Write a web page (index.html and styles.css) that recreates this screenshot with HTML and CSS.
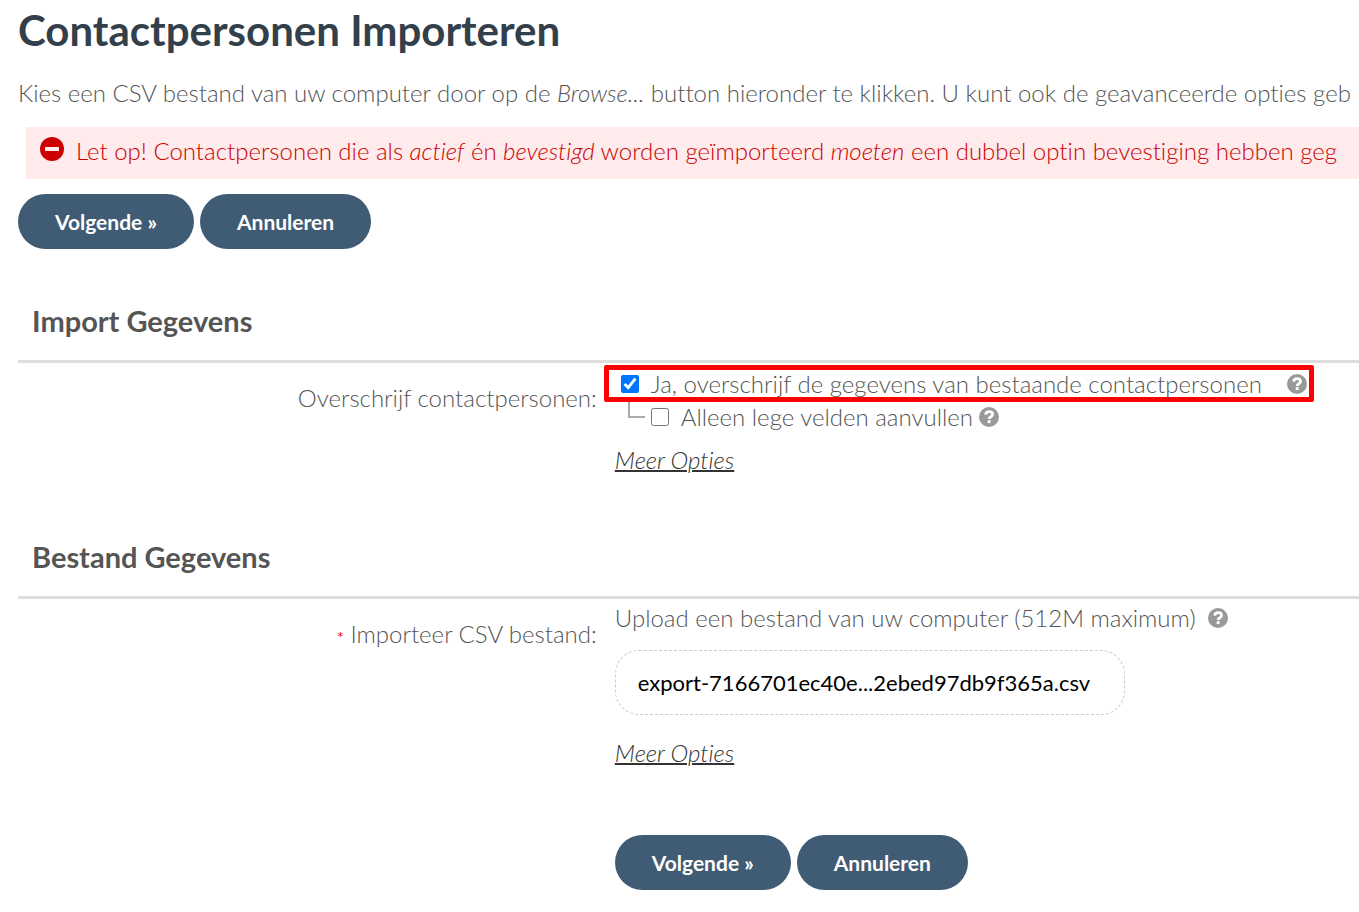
FILE: index.html
```html
<!DOCTYPE html>
<html lang="nl">
<head>
  <meta charset="UTF-8" />
  <meta name="viewport" content="width=device-width, initial-scale=1.0" />
  <title>Contactpersonen Importeren</title>
  <link rel="stylesheet" href="styles.css">
</head>
<body>
  <!-- shared icons -->
  <svg class="sprite" aria-hidden="true">
    <symbol id="help" viewBox="0 0 20 20">
      <circle cx="10" cy="10" r="10" fill="#999" />
      <path d="M6.7 7.6C6.9 5.5 8.4 4.7 10.1 4.7C12 4.7 13.5 5.8 13.5 7.5C13.5 9.8 10.2 9.7 10.2 12" fill="none" stroke="#fff" stroke-width="2.8" />
      <rect x="8.7" y="13.2" width="2.9" height="2.9" fill="#fff" />
    </symbol>
  </svg>

  <form class="page">
    <h1>Contactpersonen Importeren</h1>
    <p class="intro">Kies een CSV bestand van uw computer door op de <em>Browse...</em> button hieronder te klikken. U kunt ook de geavanceerde opties geb</p>

    <div class="alert">
      <svg class="alert-icon" viewBox="0 0 24 24" aria-hidden="true">
        <circle cx="12" cy="12" r="12" fill="#c00" />
        <rect x="5" y="10" width="14" height="4" fill="#ffebeb" />
      </svg>
      <p>Let op! Contactpersonen die als <em>actief</em> én <em>bevestigd</em> worden geïmporteerd <em>moeten</em> een dubbel optin bevestiging hebben geg</p>
    </div>

    <div class="buttons">
      <button type="button" class="btn">Volgende »</button>
      <button type="button" class="btn">Annuleren</button>
    </div>

    <section class="panel">
      <h2>Import Gegevens</h2>
      <div class="row">
        <div class="row-label"><label for="overwrite">Overschrijf contactpersonen:</label></div>
        <div class="row-field">
          <div class="option highlight">
            <input type="checkbox" id="overwrite" checked>
            <label for="overwrite">Ja, overschrijf de gegevens van bestaande contactpersonen</label>
            <svg class="help"><use href="#help" /></svg>
          </div>
          <div class="option sub-option">
            <svg class="branch" viewBox="0 0 17 16" aria-hidden="true"><path d="M1 0V15H17" fill="none" stroke="#aaa" stroke-width="2" /></svg>
            <input type="checkbox" id="emptyOnly">
            <label for="emptyOnly">Alleen lege velden aanvullen</label>
            <svg class="help"><use href="#help" /></svg>
          </div>
          <a href="#" class="more">Meer Opties</a>
        </div>
      </div>
    </section>

    <section class="panel">
      <h2>Bestand Gegevens</h2>
      <div class="row">
        <div class="row-label"><span class="required">*</span> <label for="csvFile">Importeer CSV bestand:</label></div>
        <div class="row-field">
          <div class="upload-text">Upload een bestand van uw computer (512M maximum) <svg class="help"><use href="#help" /></svg></div>
          <button type="button" class="file" id="csvFile">export-7166701ec40e...2ebed97db9f365a.csv</button>
          <a href="#" class="more">Meer Opties</a>
        </div>
      </div>
      <div class="row">
        <div class="buttons buttons-bottom">
          <button type="button" class="btn">Volgende »</button>
          <button type="button" class="btn">Annuleren</button>
        </div>
      </div>
    </section>
  </form>
</body>
</html>
```
FILE: styles.css
```css
* { box-sizing: border-box; }
body {
  margin: 0;
  font-family: Lato, "Open Sans", sans-serif;
  font-size: 24px;
  font-weight: 300;
  font-variant-ligatures: none;
  line-height: 32px;
  color: #555;
  background: #fff;
  overflow-x: hidden;
}
h1, h2, p { margin: 0; }
.sprite {
  display: none;
}
.page {
  padding: 6px 0 20px 18px;
}
h1 {
  font-size: 42px;
  line-height: 48px;
  font-weight: 700;
  color: #333f4a;
}
.intro {
  margin-top: 23px;
  white-space: nowrap;
}

/* warning bar */
.alert {
  display: flex;
  gap: 12px;
  height: 52px;
  margin: 18px 0 0 8px;
  padding: 8px 0 0 14px;
  background: #ffebeb;
  color: #c00;
  white-space: nowrap;
}
.alert-icon {
  flex: none;
  width: 24px;
  height: 24px;
  margin-top: 2px;
}

.buttons {
  display: flex;
  gap: 6px;
  margin-top: 15px;
}
.btn {
  height: 55px;
  padding: 0 37px;
  border: none;
  border-radius: 28px;
  background: #405c74;
  color: #fff;
  font-family: inherit;
  font-size: 21px;
  font-weight: 700;
  cursor: pointer;
}

/* form sections */
.panel {
  padding-top: 52px;
}
.panel h2 {
  padding: 0 14px 20px;
  border-bottom: 3px solid #ddd;
  font-size: 29px;
  line-height: 39px;
  font-weight: 700;
  color: #555;
}
.row {
  display: grid;
  grid-template-columns: 7fr 9fr;
  column-gap: 18px;
}
.row-label {
  padding-top: 19px;
  text-align: right;
}
.required {
  color: #f00;
  font-size: 16px;
  font-weight: 400;
}
.row-field {
  display: flex;
  flex-direction: column;
  align-items: flex-start;
  padding: 3px 0 9px;
}
.option {
  display: flex;
  align-items: center;
  white-space: nowrap;
}
.option input {
  width: 18px;
  height: 18px;
  margin: 0 12px 0 0;
}
.highlight {
  width: 710px;
  height: 37px;
  margin: -1px 0 0 -11px;
  padding: 0 2px 0 12px;
  border: 5px solid #f00;
  border-radius: 2px;
}
.sub-option {
  height: 30px;
  padding-left: 13px;
}
.branch {
  align-self: flex-start;
  width: 17px;
  height: 16px;
  margin-right: 6px;
}
.help {
  flex: none;
  width: 20px;
  height: 20px;
  margin-left: 6px;
}
.highlight .help {
  margin-left: auto;
}
.upload-text {
  display: flex;
  align-items: center;
  white-space: nowrap;
}
.upload-text .help {
  margin-left: 12px;
}
.more {
  margin-top: 12px;
  color: #333;
  font-style: italic;
  text-decoration-thickness: 2px;
}
.file {
  width: 510px;
  height: 65px;
  margin: 16px 0 10px;
  padding: 0 22px;
  border: 1px dashed #ccc;
  border-radius: 24px;
  background: #fff;
  color: #000;
  font-family: inherit;
  font-size: 22px;
  font-weight: 400;
  text-align: left;
}
.buttons-bottom {
  grid-column: 2;
  margin-top: 57px;
}
```
